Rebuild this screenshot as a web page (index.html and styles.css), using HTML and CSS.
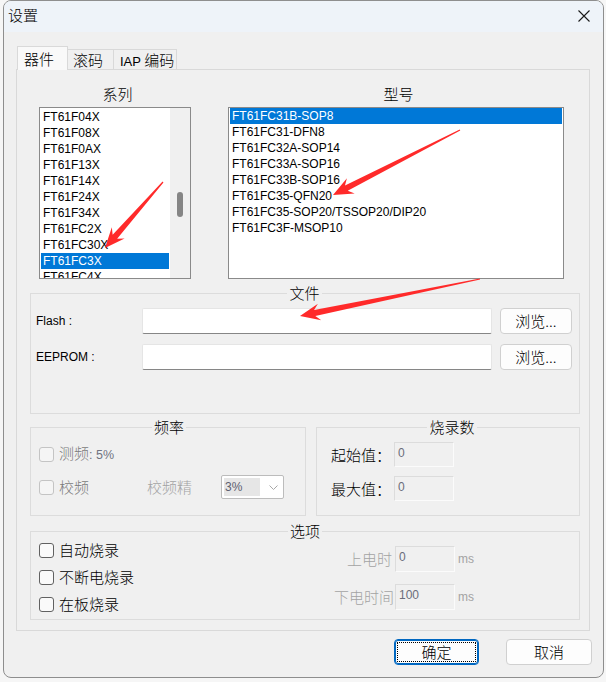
FILE: index.html
```html
<!DOCTYPE html>
<html lang="zh-CN">
<head>
<meta charset="utf-8">
<title>设置</title>
<link rel="stylesheet" href="styles.css">
</head>
<body>
<div class="dialog">
  <div class="titlebar">
    <span class="title">设置</span>
    <svg class="close" width="12" height="12" viewBox="0 0 12 12"><path d="M0.5 0.5 L11.5 11.5 M11.5 0.5 L0.5 11.5" stroke="#1a1a1a" stroke-width="1.1" fill="none"/></svg>
  </div>
  <div class="client">
    <div class="tabs">
      <div class="tab tab-active t1">器件</div>
      <div class="tab t2">滚码</div>
      <div class="tab t3"><span class="lat">IAP</span> 编码</div>
    </div>
    <div class="panel">
      <div class="lists">
        <div class="col">
          <div class="col-label">系列</div>
          <div class="listbox">
            <div class="items items-left">
              <div class="item">FT61F04X</div>
              <div class="item">FT61F08X</div>
              <div class="item">FT61F0AX</div>
              <div class="item">FT61F13X</div>
              <div class="item">FT61F14X</div>
              <div class="item">FT61F24X</div>
              <div class="item">FT61F34X</div>
              <div class="item">FT61FC2X</div>
              <div class="item">FT61FC30X</div>
              <div class="item selected">FT61FC3X</div>
              <div class="item">FT61FC4X</div>
            </div>
            <div class="vscroll"><div class="thumb"></div></div>
          </div>
        </div>
        <div class="col">
          <div class="col-label">型号</div>
          <div class="listbox">
            <div class="items items-right">
              <div class="item selected">FT61FC31B-SOP8</div>
              <div class="item">FT61FC31-DFN8</div>
              <div class="item">FT61FC32A-SOP14</div>
              <div class="item">FT61FC33A-SOP16</div>
              <div class="item">FT61FC33B-SOP16</div>
              <div class="item">FT61FC35-QFN20</div>
              <div class="item">FT61FC35-SOP20/TSSOP20/DIP20</div>
              <div class="item">FT61FC3F-MSOP10</div>
            </div>
          </div>
        </div>
      </div>

      <fieldset class="group group-file">
        <legend>文件</legend>
        <div class="file-grid">
          <span class="lbl">Flash :</span>
          <div class="edit"></div>
          <button class="btn">浏览...</button>
          <span class="lbl">EEPROM :</span>
          <div class="edit"></div>
          <button class="btn">浏览...</button>
        </div>
      </fieldset>

      <div class="row2">
        <fieldset class="group group-freq">
          <legend>频率</legend>
          <div class="freq-row">
            <span class="chk chk-dis"></span>
            <span class="dis-text">测频<span class="lat">: 5%</span></span>
          </div>
          <div class="freq-row freq-row2">
            <span class="chk chk-dis"></span>
            <span class="dis-text w-jp">校频</span>
            <span class="dis-light w-jpj">校频精</span>
            <div class="combo">
              <span class="combo-val">3%</span>
              <svg class="chev" width="9" height="5" viewBox="0 0 9 5"><path d="M0.5 0.5 L4.5 4.5 L8.5 0.5" stroke="#a8a8a8" stroke-width="1" fill="none"/></svg>
            </div>
          </div>
        </fieldset>
        <fieldset class="group group-count">
          <legend>烧录数</legend>
          <div class="count-grid">
            <span class="cn">起始值：</span>
            <div class="edit-dis">0</div>
            <span class="cn">最大值：</span>
            <div class="edit-dis">0</div>
          </div>
        </fieldset>
      </div>

      <fieldset class="group group-opt">
        <legend>选项</legend>
        <div class="opt-body">
          <div class="opt-checks">
            <div class="opt-row"><span class="chk"></span><span class="cn">自动烧录</span></div>
            <div class="opt-row"><span class="chk"></span><span class="cn">不断电烧录</span></div>
            <div class="opt-row"><span class="chk"></span><span class="cn">在板烧录</span></div>
          </div>
          <div class="opt-times">
            <span class="time-lbl">上电时</span>
            <div class="edit-dis">0</div>
            <span class="ms">ms</span>
            <span class="time-lbl">下电时间</span>
            <div class="edit-dis">100</div>
            <span class="ms">ms</span>
          </div>
        </div>
      </fieldset>
    </div>
    <div class="actions">
      <button class="btn btn-act btn-default">确定</button>
      <button class="btn btn-act">取消</button>
    </div>
  </div>
</div>
<svg class="annot" width="606" height="682" viewBox="0 0 606 682">
  <polygon fill="#ff2a2a" points="163.45,182.40 117.15,238.71 124.58,238.59 105,248 111.82,227.37 112.65,234.75 162.55,181.60"/>
  <polygon fill="#ff2a2a" points="460.27,130.53 347.72,190.83 354.68,193.45 333,195 346.92,178.31 344.98,185.49 459.73,129.47"/>
  <polygon fill="#ff2a2a" points="480.12,279.59 315.29,315.92 321.30,320.30 300,316 317.88,303.64 314.09,310.04 479.88,278.41"/>
</svg>
</body>
</html>
```

FILE: styles.css
```css
* { box-sizing: border-box; }

html, body {
  margin: 0;
  padding: 0;
}

body {
  width: 606px;
  height: 682px;
  overflow: hidden;
  position: relative;
  background: #f6f6f6;
  font-family: "Noto Sans CJK SC", "Liberation Sans", sans-serif;
  font-size: 15px;
  font-weight: 300;
  color: #000;
}

.lat {
  font-family: "Liberation Sans", sans-serif;
  font-weight: 400;
}

.dialog {
  margin-left: 3px;
  width: 601px;
  height: 678px;
  border: 1px solid #8e8e8e;
  border-radius: 8px;
  overflow: hidden;
  background: #f0f0f0;
}

.titlebar {
  height: 31px;
  background: #eef3f9;
  display: flex;
  align-items: flex-start;
  justify-content: space-between;
  padding: 0 13px 0 4px;
}

.title {
  margin-top: 4px;
  font-size: 15px;
  line-height: 20px;
}

.close {
  margin-top: 9px;
  display: block;
}

.client {
  padding: 14px 13px 0 12px;
}

/* tabs */
.tabs {
  display: flex;
  align-items: flex-end;
  height: 24px;
  margin-left: 1px;
  position: relative;
  z-index: 1;
}

.tab {
  height: 20px;
  margin-bottom: 1px;
  border: 1px solid #d9d9d9;
  border-bottom: none;
  background: #f0f0f0;
  font-size: 15px;
  line-height: 19px;
  white-space: nowrap;
  margin-left: -1px;
}

.tab .lat { font-size: 13px; }

.tab-active {
  height: 24px;
  margin-bottom: 0;
  margin-left: 0;
  background: #f9f9f9;
  line-height: 23px;
}

.t1 { width: 51px; padding-left: 6px; }
.t2 { width: 47px; padding-left: 5px; }
.t3 { width: 64px; padding-left: 6px; }

.panel {
  margin-top: -1px;
  width: 574px;
  border: 1px solid #d9d9d9;
  background: #f0f0f0;
  padding: 14px 9px 10px 13px;
}

/* lists */
.lists {
  display: grid;
  grid-template-columns: 152px 336px;
  column-gap: 37px;
  margin-left: 9px;
}

.col-label {
  height: 20px;
  line-height: 20px;
  text-align: center;
  padding-left: 5px;
  margin-bottom: 3px;
}

.listbox {
  height: 172px;
  border: 1px solid #8a8a8a;
  background: #fff;
  display: flex;
  overflow: hidden;
}

.items {
  flex: 1;
  padding: 1px 1px 0;
  overflow: hidden;
}

.items-right { padding-top: 0; }

.item {
  height: 16px;
  line-height: 16px;
  padding-left: 2px;
  font-family: "Liberation Sans", sans-serif;
  font-weight: 400;
  font-size: 12px;
  white-space: nowrap;
  color: #000;
}

.item.selected {
  background: #0078d7;
  color: #fff;
}

.vscroll {
  width: 20px;
  background: #f0f0f0;
  padding-top: 84px;
  padding-left: 7px;
}

.thumb {
  width: 6px;
  height: 25px;
  border-radius: 3px;
  background: #858585;
}

/* group boxes */
.group {
  margin: 0;
  border: 1px solid #dcdcdc;
  min-inline-size: 0;
}

.group legend {
  margin: 0 auto;
  padding: 0 2px;
  font-size: 15px;
  line-height: 18px;
}

.group-file {
  margin-top: 5px;
  padding: 6px 6px 43px 5px;
}

.file-grid {
  display: grid;
  grid-template-columns: 98px 350px 72px;
  grid-auto-rows: 26px;
  column-gap: 8px;
  row-gap: 10px;
  align-items: center;
}

.lbl {
  font-family: "Liberation Sans", sans-serif;
  font-weight: 400;
  font-size: 12px;
}

.edit {
  height: 26px;
  background: #fff;
  border: 1px solid #e5e5e5;
  border-bottom-color: #868686;
  border-radius: 2px;
}

.btn {
  height: 26px;
  margin: 0;
  padding: 0;
  background: #fdfdfd;
  border: 1px solid #d0d0d0;
  border-radius: 4px;
  font-family: "Noto Sans CJK SC", "Liberation Sans", sans-serif;
  font-weight: 300;
  font-size: 15px;
  line-height: 22px;
  color: #000;
}

.row2 {
  margin-top: 4px;
  display: grid;
  grid-template-columns: 276px 264px;
  column-gap: 10px;
}

.group-freq {
  padding: 6px 6px 16px 8px;
}

.freq-row {
  height: 24px;
  display: flex;
  align-items: center;
}

.freq-row2 { margin-top: 9px; }

.chk {
  width: 15px;
  height: 15px;
  border: 1px solid #616161;
  border-radius: 3px;
  background: #fafafa;
  margin-right: 5px;
  flex: none;
}

.chk-dis {
  border-color: #c4c4c4;
  background: #f5f5f5;
}

.dis-text {
  color: #7b7b7b;
  line-height: 20px;
}

.dis-text .lat {
  font-size: 12.5px;
  color: #6f7380;
}

.dis-light {
  color: #a3a3a3;
  line-height: 20px;
}

.w-jp { width: 88px; }
.w-jpj { width: 74px; }

.combo {
  width: 63px;
  height: 24px;
  border: 1px solid #bcbcbc;
  border-radius: 2px;
  background: #fff;
  display: flex;
  align-items: center;
  padding: 2px;
}

.combo-val {
  width: 36px;
  height: 18px;
  background: #e6e6e6;
  font-family: "Liberation Sans", sans-serif;
  font-weight: 400;
  font-size: 12px;
  line-height: 18px;
  color: #5d6070;
  padding-left: 1px;
}

.chev {
  display: block;
  margin-left: 9px;
}

.group-count {
  padding: 6px 6px 14px 14px;
}

.count-grid {
  display: grid;
  grid-template-columns: 63px 60px;
  grid-auto-rows: 25px;
  row-gap: 9px;
  align-items: center;
}

.cn {
  line-height: 20px;
  white-space: nowrap;
}

.edit-dis {
  height: 100%;
  background: #f0f0f0;
  border: 1px solid;
  border-color: #dcdcdc #fbfbfb #fbfbfb #dcdcdc;
  padding: 2px 3px;
  font-family: "Liberation Sans", sans-serif;
  font-weight: 400;
  font-size: 12px;
  line-height: 16px;
  color: #6a6d7a;
}

.group-opt {
  margin-top: 6px;
  padding: 0 8px 5px 8px;
}

.opt-body {
  display: flex;
  justify-content: space-between;
}

.opt-checks {
  display: flex;
  flex-direction: column;
  row-gap: 7px;
}

.opt-row {
  height: 20px;
  display: flex;
  align-items: center;
}

.opt-times {
  margin-top: 6px;
  margin-right: 96px;
  display: grid;
  grid-template-columns: 58px 60px 17px;
  grid-auto-rows: 26px;
  column-gap: 3px;
  row-gap: 12px;
  align-items: center;
}

.time-lbl {
  text-align: right;
  color: #a3a3a3;
  line-height: 20px;
  white-space: nowrap;
}

.ms {
  font-family: "Liberation Sans", sans-serif;
  font-weight: 400;
  font-size: 12px;
  color: #a3a3a3;
}

.actions {
  display: flex;
  justify-content: flex-end;
  column-gap: 27px;
  margin-top: 8px;
  margin-right: -2px;
}

.btn-act {
  width: 86px;
}

.btn-default {
  width: 85px;
  border: 1px solid #0067c0;
  box-shadow: inset 0 0 0 1px #0067c0;
  outline: 1px dotted #000;
  outline-offset: -4px;
}

.annot {
  position: absolute;
  top: 0;
  left: 0;
  pointer-events: none;
}
```
